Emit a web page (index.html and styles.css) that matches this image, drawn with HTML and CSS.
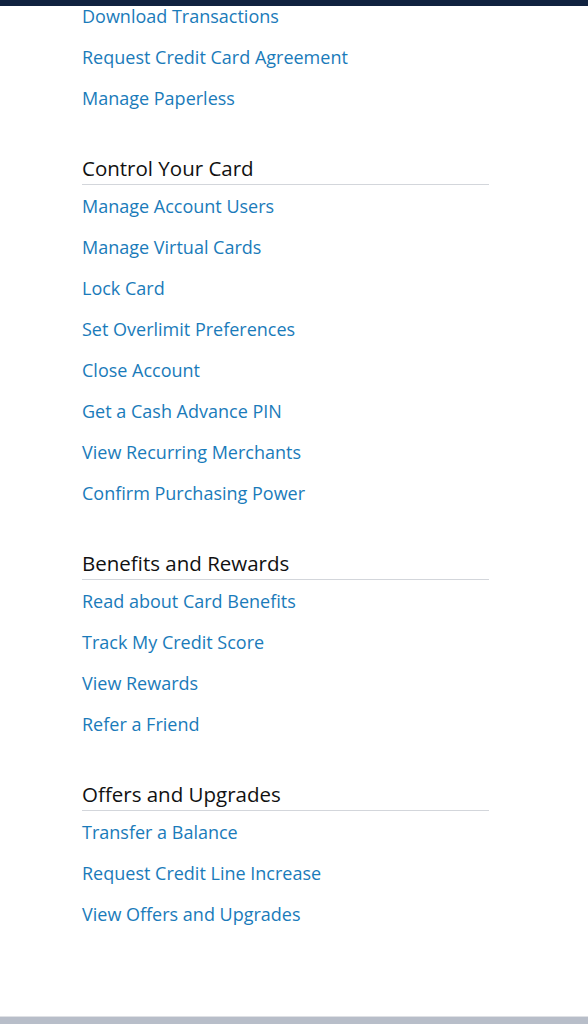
FILE: index.html
```html
<!DOCTYPE html>
<html>
<head>
<title>Account Services</title>
<link rel="stylesheet" href="styles.css">
</head>
<body>
<div class="topbar"></div>
<div class="container">
  <div class="section first">
    <a class="link" href="#">Download Transactions</a>
    <a class="link" href="#">Request Credit Card Agreement</a>
    <a class="link" href="#">Manage Paperless</a>
  </div>
  <div class="section">
    <h2>Control Your Card</h2>
    <a class="link" href="#">Manage Account Users</a>
    <a class="link" href="#">Manage Virtual Cards</a>
    <a class="link" href="#">Lock Card</a>
    <a class="link" href="#">Set Overlimit Preferences</a>
    <a class="link" href="#">Close Account</a>
    <a class="link" href="#">Get a Cash Advance PIN</a>
    <a class="link" href="#">View Recurring Merchants</a>
    <a class="link" href="#">Confirm Purchasing Power</a>
  </div>
  <div class="section">
    <h2>Benefits and Rewards</h2>
    <a class="link" href="#">Read about Card Benefits</a>
    <a class="link" href="#">Track My Credit Score</a>
    <a class="link" href="#">View Rewards</a>
    <a class="link" href="#">Refer a Friend</a>
  </div>
  <div class="section">
    <h2>Offers and Upgrades</h2>
    <a class="link" href="#">Transfer a Balance</a>
    <a class="link" href="#">Request Credit Line Increase</a>
    <a class="link" href="#">View Offers and Upgrades</a>
  </div>
</div>
<div class="bottombar"></div>
</body>
</html>
```

FILE: styles.css
```css
body {
  font-family: "Open Sans", Arial, sans-serif;
  margin: 0;
  padding: 0;
  background-color: white;
  height: 1024px;
  overflow: hidden;
}

.topbar {
  position: fixed;
  top: 0;
  left: 0;
  right: 0;
  height: 6px;
  background-color: #10223f;
}

.bottombar {
  position: fixed;
  left: 0;
  right: 0;
  bottom: 0;
  height: 7px;
  border-top: 1px solid #dfe1e5;
  background-color: #b8bec9;
}

.container {
  width: 407px;
  padding: 4px 0 0 82px;
}

.section {
  margin-top: 29px;
}

.section.first {
  margin-top: 0;
}

.section h2 {
  margin: 0 0 9px 0;
  padding-bottom: 4px;
  font-size: 20.5px;
  font-weight: normal;
  line-height: 24px;
  color: #111111;
  border-bottom: 1px solid #d3d6db;
}

.link {
  display: block;
  height: 24px;
  padding-bottom: 17px;
  font-size: 18px;
  line-height: 24px;
  color: #1a7bba;
  text-decoration: none;
}
```
